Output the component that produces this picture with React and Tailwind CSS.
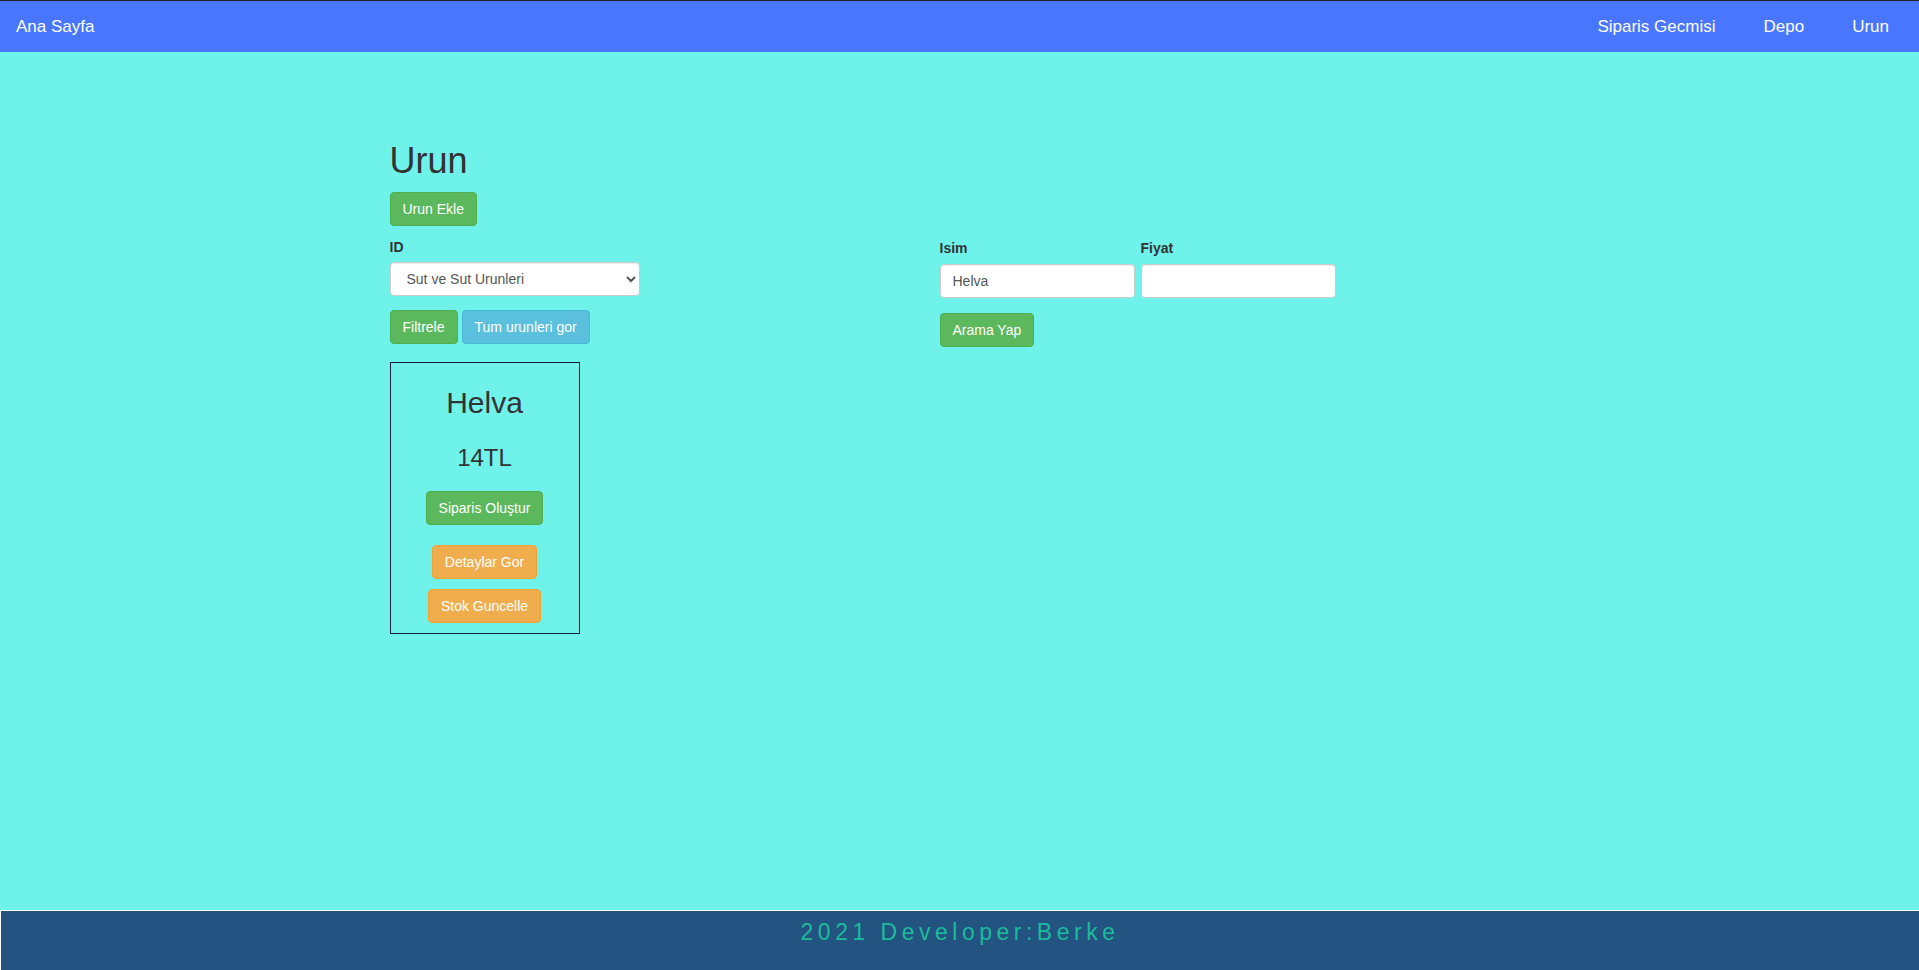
import React, { useState } from "react";

/* -------------------- DATA -------------------- */

const NAV_LINKS = ["Siparis Gecmisi", "Depo", "Urun"];

const CATEGORIES = ["Sut ve Sut Urunleri", "Et Urunleri", "Temel Gida", "Atistirmalik"];

const PRODUCTS = [{ id: 1, name: "Helva", price: 14 }];

/* -------------------- BUTTON STYLES -------------------- */

const BTN =
  "inline-block rounded-[4px] border px-3 py-[6px] text-[14px] leading-5 text-white whitespace-nowrap cursor-pointer";

const BTN_COLORS = {
  success: "bg-[#5cb85c] border-[#4cae4c] hover:bg-[#449d44]",
  info: "bg-[#5bc0de] border-[#46b8da] hover:bg-[#31b0d5]",
  warning: "bg-[#f0ad4e] border-[#eea236] hover:bg-[#ec971f]",
};

const Button = ({ kind = "success", className = "", children, ...rest }) => (
  <button type="button" className={`${BTN} ${BTN_COLORS[kind]} ${className}`} {...rest}>
    {children}
  </button>
);

const INPUT =
  "h-[34px] rounded-[4px] border border-[#ccc] bg-white px-3 text-[14px] text-[#555] shadow-[inset_0_1px_1px_rgba(0,0,0,0.075)] outline-none";

/* -------------------- PRODUCT CARD -------------------- */

const ProductCard = ({ product }) => (
  <div className="flex w-[190px] flex-col items-center border border-[#101b3a] pt-[23px] pb-[10px]">
    <h2 className="text-[30px] leading-[33px] text-[#333]">{product.name}</h2>
    <h3 className="mt-[26px] text-[24px] leading-[26px] text-[#333]">{product.price}TL</h3>
    <Button className="mt-[20px]">Siparis Oluştur</Button>
    <Button kind="warning" className="mt-[20px]">
      Detaylar Gor
    </Button>
    <Button kind="warning" className="mt-[10px]">
      Stok Guncelle
    </Button>
  </div>
);

/* -------------------- APP -------------------- */

const App = () => {
  const [category, setCategory] = useState(CATEGORIES[0]);
  const [name, setName] = useState("Helva");
  const [price, setPrice] = useState("");

  return (
    <div className="flex min-h-screen flex-col bg-[#6ff2ea] font-['Liberation_Sans',Arial,sans-serif] text-[14px] text-[#333]">
      {/* Navbar */}
      <nav className="flex h-[52px] items-center justify-between border-t border-[#222] bg-[#4876ff] pl-4 pr-[6px] text-[17px] text-white">
        <a href="#" className="leading-5">
          Ana Sayfa
        </a>
        <div className="flex">
          {NAV_LINKS.map((link) => (
            <a key={link} href="#" className="px-6 leading-5">
              {link}
            </a>
          ))}
        </div>
      </nav>

      {/* Content */}
      <main className="flex-1">
        <div className="mx-auto flex w-[1170px] items-start px-[15px] pt-[89px]">
          {/* Left column */}
          <div className="flex w-[550px] flex-col items-start">
            <h1 className="mb-[11px] text-[36px] leading-[39.6px] text-[#333]">Urun</h1>
            <Button>Urun Ekle</Button>

            <label className="mt-[11px] block text-[14px] leading-5 font-bold">ID</label>
            <select
              value={category}
              onChange={(e) => setCategory(e.target.value)}
              className={`${INPUT} mt-[5px] w-[250px]`}
            >
              {CATEGORIES.map((c) => (
                <option key={c}>{c}</option>
              ))}
            </select>

            <div className="mt-[14px] flex gap-1">
              <Button>Filtrele</Button>
              <Button kind="info">Tum urunleri gor</Button>
            </div>

            <div className="mt-[18px] flex flex-wrap gap-4">
              {PRODUCTS.map((p) => (
                <ProductCard key={p.id} product={p} />
              ))}
            </div>
          </div>

          {/* Right column: search */}
          <div className="flex flex-col items-start pt-[97px]">
            <div className="flex gap-[6px]">
              <div className="flex flex-col">
                <label className="text-[14px] leading-5 font-bold">Isim</label>
                <input
                  value={name}
                  onChange={(e) => setName(e.target.value)}
                  className={`${INPUT} mt-[6px] w-[195px]`}
                />
              </div>
              <div className="flex flex-col">
                <label className="text-[14px] leading-5 font-bold">Fiyat</label>
                <input
                  value={price}
                  onChange={(e) => setPrice(e.target.value)}
                  className={`${INPUT} mt-[6px] w-[195px]`}
                />
              </div>
            </div>
            <Button className="mt-[15px]">Arama Yap</Button>
          </div>
        </div>
      </main>

      {/* Footer */}
      <footer className="h-[60px] border-t border-l border-white bg-[#235380] pt-[8px] text-center">
        <p className="text-[23px] leading-[26px] tracking-[4.5px] text-[#1abc9c]">2021 Developer:Berke</p>
      </footer>
    </div>
  );
};

export default App;
